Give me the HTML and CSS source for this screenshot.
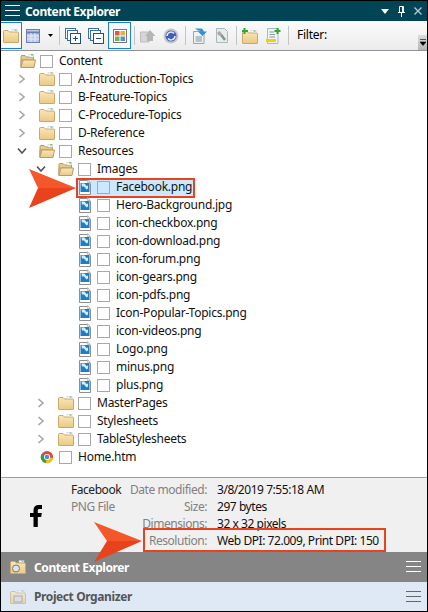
FILE: index.html
```html
<!DOCTYPE html>
<html lang="en">
<head>
    <meta charset="UTF-8">
    <meta name="viewport" content="width=device-width, initial-scale=1.0">
    <title>Content Explorer</title>
    <link rel="stylesheet" href="styles.css">
</head>
<body>

<!-- shared icons -->
<svg class="defs" width="0" height="0">
    <defs>
        <linearGradient id="folderFill" x1="0" y1="0" x2="0" y2="1">
            <stop offset="0" stop-color="#fbe7b4"/>
            <stop offset="1" stop-color="#e9c987"/>
        </linearGradient>
        <symbol id="folder" viewBox="0 0 16 14">
            <path d="M0.5 13V2.5Q0.5 1.5 1.5 1.5H5L6.5 3H14.500Q15.500 3 15.500 4V13Q15.500 13.500 15 13.500H1Q0.500 13.500 0.500 13Z" fill="url(#folderFill)" stroke="#c9a86a"/>
            <rect x="9" y="0.5" width="5" height="2" fill="#fff" stroke="#c9c9b0" stroke-width="0.5"/>
            <rect x="11.5" y="0.5" width="2" height="1.2" fill="#5bb8d8"/>
        </symbol>
        <symbol id="folderOpen" viewBox="0 0 16 14">
            <path d="M1 13V2.5Q1 1.5 2 1.5H5L6.5 3H13.500V6H1Z" fill="#e7cb8e" stroke="#b79a66"/>
            <rect x="9" y="0.5" width="4.5" height="2.5" fill="#fff" stroke="#c9c9b0" stroke-width="0.5"/>
            <rect x="11" y="0.3" width="2.4" height="1.2" fill="#4fc06f"/>
            <path d="M3 6H15.500L14 13.500H0.800Z" fill="url(#folderFill)" stroke="#b79a66"/>
        </symbol>
        <symbol id="image" viewBox="0 0 12 16">
            <path d="M0.5 1.500H8.500L11.500 4.500V15.500H0.500Z" fill="#fff" stroke="#8f8f8f"/>
            <path d="M8.500 0.500L11.500 3.500H8.500Z" fill="#e4e4e4" stroke="#a8a8a8" stroke-width="0.600"/>
            <rect x="1.500" y="4" width="9" height="9" fill="#1a7ec8"/>
            <path d="M2.500 4.500H5.500L7.500 7L9 6.500V9.500L7.500 10.500L5 7.500H3Z" fill="#d4ebf9"/>
        </symbol>
        <symbol id="chevRight" viewBox="0 0 8 10">
            <path d="M1.5 1L6 5L1.5 9" fill="none" stroke="#a6a6a6" stroke-width="1.6"/>
        </symbol>
        <symbol id="chevDown" viewBox="0 0 10 8">
            <path d="M1 1.5L5 6L9 1.5" fill="none" stroke="#555" stroke-width="1.6"/>
        </symbol>
        <symbol id="menu" viewBox="0 0 15 12">
            <path d="M0 0.5H15M0 5.5H15M0 10.5H15" fill="none" stroke="currentColor"/>
        </symbol>
        <symbol id="stack" viewBox="0 0 16 16">
            <rect x="0.5" y="0.5" width="10" height="10" fill="#fff" stroke="#3a6ea5"/>
            <rect x="2.5" y="2.5" width="10" height="10" fill="#fff" stroke="#3a6ea5"/>
            <rect x="5.5" y="5.5" width="10" height="10" fill="#fff" stroke="#1f4f8a"/>
        </symbol>
    </defs>
</svg>

<div class="panel">
    <header class="title-bar">
        <svg class="title-menu"><use href="#menu"/></svg>
        <span class="title-text">Content Explorer</span>
        <svg class="title-icon" width="8" height="5" viewBox="0 0 8 5"><path d="M0 0H8L4 5Z" fill="#fff"/></svg>
        <svg class="title-icon pin" width="7" height="11" viewBox="0 0 7 11"><path d="M1.5 0.5H5.5V6.5H1.5ZM0 6.5H7M3.5 7V11" fill="none" stroke="#fff"/><path d="M4 1H5.5V6H4Z" fill="#fff"/></svg>
        <svg class="title-icon close" width="8" height="8" viewBox="0 0 8 8"><path d="M0.5 0.5L7.5 7.5M7.5 0.5L0.5 7.5" stroke="#b5c9cf" stroke-width="1.4"/></svg>
    </header>

    <div class="toolbar">
        <span class="tool active first"><svg class="ico" width="16" height="14"><use href="#folder"/></svg></span>
        <svg class="ico tool-table" width="14" height="14" viewBox="0 0 14 14"><rect x="0.5" y="0.5" width="13" height="13" fill="#bcc9ea" stroke="#6d7fae"/><path d="M0.5 3.5H13.5" stroke="#6d7fae" stroke-width="2"/><path d="M1 7H13M1 10H13M5 4V13M9 4V13" stroke="#e4eaf8"/></svg>
        <svg class="caret" width="5" height="3" viewBox="0 0 5 3"><path d="M0 0H5L2.500 3Z" fill="#000"/></svg>
        <span class="sep sep-a"></span>
        <svg class="ico tool-plus" width="16" height="16"><use href="#stack"/><path d="M8 10.500H13M10.500 8V13" stroke="#1f4f8a"/></svg>
        <svg class="ico tool-minus" width="16" height="16"><use href="#stack"/><path d="M8 10.500H13" stroke="#1f4f8a"/></svg>
        <span class="tool active tool-color">
            <svg width="14" height="14" viewBox="0 0 14 14"><rect x="0.500" y="0.500" width="13" height="13" fill="#fff" stroke="#777"/><rect x="2" y="2" width="4.500" height="4.500" fill="#e2574c"/><rect x="7.500" y="2" width="4.500" height="4.500" fill="#efb02f"/><rect x="2" y="7.500" width="4.500" height="4.500" fill="#6fb65a"/><rect x="7.500" y="7.500" width="4.500" height="4.500" fill="#5b8fd6"/></svg>
        </span>
        <span class="sep sep-b"></span>
        <svg class="ico tool-grey" width="16" height="14" viewBox="0 0 16 14"><path d="M0.500 3H9V13H0.500Z" fill="#d6d6d6" stroke="#bdbdbd"/><path d="M5 7L10 1L15.500 7H13V12H7V7Z" fill="#b5b5b5"/></svg>
        <svg class="ico tool-refresh" width="16" height="16" viewBox="0 0 16 16"><circle cx="8" cy="8" r="7.500" fill="#c8c8c8"/><circle cx="8" cy="8" r="5.500" fill="#3f5fc0"/><path d="M4 8A4 4 0 0 1 11 5.500M12 8A4 4 0 0 1 5 10.500" fill="none" stroke="#e8eefc" stroke-width="1.500"/></svg>
        <span class="sep sep-c"></span>
        <svg class="ico tool-doc" width="15" height="16" viewBox="0 0 15 16"><path d="M0.500 3.500H11V15.500H0.500Z" fill="#eef3f3" stroke="#8fa8a8"/><path d="M2.500 9H9M2.500 11H9M2.500 13H9" stroke="#7f9696"/><path d="M2 0.500H8Q10 0.500 10.500 3.500H14L9.500 8L5 3.500H8Q7 2.500 5 2.500Z" fill="#2f93d8"/></svg>
        <svg class="ico tool-wrench" width="12" height="15" viewBox="0 0 12 15"><path d="M0.500 0.500H8.500L11.500 3.500V14.500H0.500Z" fill="#e6eded" stroke="#a9b8b8"/><path d="M4.500 6L9 12" stroke="#8e8e8e" stroke-width="2.500"/><path d="M2 3.500A2.500 2.500 0 0 0 6.500 6.500L5 5.500L4.500 3.500Z" fill="#a8a8a8"/></svg>
        <span class="sep sep-d"></span>
        <svg class="ico tool-newfolder" width="16" height="16" viewBox="0 0 16 16"><svg x="0" y="2" width="16" height="14"><use href="#folder"/></svg><path d="M2.500 0V6M0 3H6" stroke="#2ea836" stroke-width="2"/></svg>
        <svg class="ico tool-newdoc" width="15" height="16" viewBox="0 0 15 16"><path d="M1.500 0.500H12V15.500H1.500Z" fill="#eef3f3" stroke="#a9b8b8"/><path d="M3.500 4H8M3.500 6.500H9M3.500 9H9" stroke="#8a9a9a"/><rect x="0" y="11" width="10" height="3" fill="#f4d000"/><path d="M11.500 0V6M8.500 3H14.500" stroke="#2ea836" stroke-width="2"/></svg>
        <span class="sep sep-e"></span>
        <span class="filter-label">Filter:</span>
        <span class="overflow"><svg width="6" height="7" viewBox="0 0 6 7"><path d="M0 0.500H6M0 3H6L3 6.500Z" fill="#000" stroke="#000" stroke-width="0.600"/></svg></span>
    </div>

    <ul class="tree">
        <li class="row d0"><span class="twist"></span><svg class="node-icon"><use href="#folderOpen"/></svg><span class="check"></span><span class="name">Content</span></li>
        <li class="row d1"><span class="twist"><svg class="chev"><use href="#chevRight"/></svg></span><svg class="node-icon"><use href="#folder"/></svg><span class="check"></span><span class="name">A-Introduction-Topics</span></li>
        <li class="row d1"><span class="twist"><svg class="chev"><use href="#chevRight"/></svg></span><svg class="node-icon"><use href="#folder"/></svg><span class="check"></span><span class="name">B-Feature-Topics</span></li>
        <li class="row d1"><span class="twist"><svg class="chev"><use href="#chevRight"/></svg></span><svg class="node-icon"><use href="#folder"/></svg><span class="check"></span><span class="name">C-Procedure-Topics</span></li>
        <li class="row d1"><span class="twist"><svg class="chev"><use href="#chevRight"/></svg></span><svg class="node-icon"><use href="#folder"/></svg><span class="check"></span><span class="name">D-Reference</span></li>
        <li class="row d1"><span class="twist"><svg class="chev-open"><use href="#chevDown"/></svg></span><svg class="node-icon"><use href="#folderOpen"/></svg><span class="check"></span><span class="name">Resources</span></li>
        <li class="row d2"><span class="twist"><svg class="chev-open"><use href="#chevDown"/></svg></span><svg class="node-icon"><use href="#folderOpen"/></svg><span class="check"></span><span class="name">Images</span></li>
        <li class="row d3"><span class="twist"></span><span class="selected"><svg class="file-icon"><use href="#image"/></svg><span class="check"></span><span class="name">Facebook.png</span></span></li>
        <li class="row d3"><span class="twist"></span><svg class="file-icon"><use href="#image"/></svg><span class="check"></span><span class="name">Hero-Background.jpg</span></li>
        <li class="row d3"><span class="twist"></span><svg class="file-icon"><use href="#image"/></svg><span class="check"></span><span class="name">icon-checkbox.png</span></li>
        <li class="row d3"><span class="twist"></span><svg class="file-icon"><use href="#image"/></svg><span class="check"></span><span class="name">icon-download.png</span></li>
        <li class="row d3"><span class="twist"></span><svg class="file-icon"><use href="#image"/></svg><span class="check"></span><span class="name">icon-forum.png</span></li>
        <li class="row d3"><span class="twist"></span><svg class="file-icon"><use href="#image"/></svg><span class="check"></span><span class="name">icon-gears.png</span></li>
        <li class="row d3"><span class="twist"></span><svg class="file-icon"><use href="#image"/></svg><span class="check"></span><span class="name">icon-pdfs.png</span></li>
        <li class="row d3"><span class="twist"></span><svg class="file-icon"><use href="#image"/></svg><span class="check"></span><span class="name">Icon-Popular-Topics.png</span></li>
        <li class="row d3"><span class="twist"></span><svg class="file-icon"><use href="#image"/></svg><span class="check"></span><span class="name">icon-videos.png</span></li>
        <li class="row d3"><span class="twist"></span><svg class="file-icon"><use href="#image"/></svg><span class="check"></span><span class="name">Logo.png</span></li>
        <li class="row d3"><span class="twist"></span><svg class="file-icon"><use href="#image"/></svg><span class="check"></span><span class="name">minus.png</span></li>
        <li class="row d3"><span class="twist"></span><svg class="file-icon"><use href="#image"/></svg><span class="check"></span><span class="name">plus.png</span></li>
        <li class="row d2"><span class="twist"><svg class="chev"><use href="#chevRight"/></svg></span><svg class="node-icon"><use href="#folder"/></svg><span class="check"></span><span class="name">MasterPages</span></li>
        <li class="row d2"><span class="twist"><svg class="chev"><use href="#chevRight"/></svg></span><svg class="node-icon"><use href="#folder"/></svg><span class="check"></span><span class="name">Stylesheets</span></li>
        <li class="row d2"><span class="twist"><svg class="chev"><use href="#chevRight"/></svg></span><svg class="node-icon"><use href="#folder"/></svg><span class="check"></span><span class="name">TableStylesheets</span></li>
        <li class="row d1"><span class="twist"></span>
            <svg class="node-icon" viewBox="0 0 16 16"><circle cx="8" cy="8" r="7" fill="#dd4b3e"/><path d="M8 8L14.900 9A7 7 0 0 1 6 14.700Z" fill="#f4c20d"/><path d="M8 8L6.500 15A7 7 0 0 1 1.800 4.500Z" fill="#2f9e4f"/><circle cx="8" cy="8" r="3.500" fill="#fff"/><circle cx="8" cy="8" r="2.600" fill="#4a8af4"/></svg>
            <span class="check"></span><span class="name">Home.htm</span></li>
    </ul>

    <section class="details">
        <div class="preview">
            <svg width="12" height="22" viewBox="0 0 12 22"><path d="M3.500 22V12H0V8H3.500V5.500C3.500 1.800 5.500 0 8.500 0H12V4H9.500C8.300 4 7.800 4.600 7.800 5.800V8H11.800L11.200 12H7.800V22Z" fill="#000"/></svg>
        </div>
        <div class="file-summary">
            <span class="file-name">Facebook</span>
            <span>PNG File</span>
        </div>
        <dl class="props">
            <dt>Date modified:</dt><dd>3/8/2019 7:55:18 AM</dd>
            <dt>Size:</dt><dd>297 bytes</dd>
            <dt>Dimensions:</dt><dd>32 x 32 pixels</dd>
            <dt>Resolution:</dt><dd>Web DPI: 72.009, Print DPI: 150</dd>
        </dl>
    </section>

    <div class="acc acc-on">
        <svg class="acc-icon" width="16" height="14"><use href="#folder"/><circle cx="6" cy="8.500" r="3.500" fill="#dfe3ea" stroke="#777"/></svg>
        <span class="acc-label">Content Explorer</span>
        <svg class="acc-menu"><use href="#menu"/></svg>
    </div>
    <div class="acc acc-off">
        <svg class="acc-icon faded" width="16" height="14"><use href="#folder"/><rect x="4" y="6" width="8" height="6" fill="#d4d8dc" stroke="#888"/></svg>
        <span class="acc-label">Project Organizer</span>
        <svg class="acc-menu"><use href="#menu"/></svg>
    </div>

    <!-- callouts laid over the screenshot -->
    <div class="callout-box"></div>
    <svg class="arrow arrow-tree" width="48" height="40" viewBox="0 0 48 40"><path d="M0 0L47 19H9Z" fill="#f4582a"/><path d="M47 19L0 39L9 19Z" fill="#e8431c"/></svg>
    <svg class="arrow arrow-details" width="48" height="40" viewBox="0 0 48 40"><path d="M0 0L48 19H13Z" fill="#f4582a"/><path d="M48 19L0 40L13 19Z" fill="#e8431c"/></svg>
</div>

</body>
</html>
```

FILE: styles.css
```css
* {
    box-sizing: border-box;
}
body {
    margin: 0;
    font-family: "Noto Sans", Arial, sans-serif;
    font-size: 12px;
    letter-spacing: -0.25px;
    background-color: #fff;
}
ul, dl, dd {
    margin: 0;
    padding: 0;
}
svg {
    display: block;
    flex-shrink: 0;
}
.defs {
    position: absolute;
}
.panel {
    position: relative;
    width: 428px;
    height: 612px;
    border: 1px solid #000;
    display: flex;
    flex-direction: column;
    overflow: hidden;
}

/* title bar */
.title-bar {
    height: 20px;
    flex-shrink: 0;
    display: flex;
    align-items: center;
    background-color: #004455;
    color: #fff;
    padding-left: 4px;
}
.title-menu {
    width: 15px;
    height: 12px;
    color: #fff;
}
.title-text {
    margin-left: 5px;
    font-weight: 700;
    flex: 1;
    letter-spacing: -0.4px;
}
.title-icon {
    margin-right: 9px;
}
.title-icon.close {
    margin-right: 5px;
}

/* toolbar */
.toolbar {
    position: relative;
    height: 30px;
    flex-shrink: 0;
    display: flex;
    align-items: center;
    background: linear-gradient(#fbfbfb, #ececec);
    border-bottom: 1px solid #8e9498;
}
.tool {
    display: flex;
    align-items: center;
    justify-content: center;
    height: 27px;
    flex-shrink: 0;
}
.tool.active {
    border: 1px solid #1a7fd0;
    background-color: #f6f9fc;
}
.tool.first {
    width: 22px;
    margin-left: -1px;
}
.tool-table { margin-left: 4px; }
.caret { margin-left: 8px; }
.sep {
    width: 1px;
    height: 19px;
    background-color: #c4c4c4;
    flex-shrink: 0;
}
.sep-a { margin-left: 6px; }
.tool-plus { margin-left: 5px; }
.tool-minus { margin-left: 7px; }
.tool-color { width: 23px; margin-left: 4px; }
.sep-b { margin-left: 3px; }
.tool-grey { margin-left: 5px; }
.tool-refresh { margin-left: 7px; }
.sep-c { margin-left: 6px; }
.tool-doc { margin-left: 7px; }
.tool-wrench { margin-left: 8px; }
.sep-d { margin-left: 8px; }
.tool-newfolder { margin-left: 5px; }
.tool-newdoc { margin-left: 8px; }
.sep-e { margin-left: 7px; }
.filter-label {
    margin-left: 8px;
    color: #000;
    margin-top: -2px;
}
.overflow {
    margin-left: auto;
    align-self: flex-end;
    width: 9px;
    height: 15px;
    background: linear-gradient(#dcdcdc, #b4b4b4);
    display: flex;
    align-items: center;
    justify-content: center;
}

/* tree */
.tree {
    list-style: none;
    height: 426px;
    flex-shrink: 0;
    padding-top: 1px;
    color: #111;
    background-color: #fff;
}
.row {
    display: flex;
    align-items: center;
    height: 18px;
    white-space: nowrap;
}
.d0 { padding-left: 0; }
.d1 { padding-left: 19px; }
.d2 { padding-left: 38px; }
.d3 { padding-left: 57px; }
.twist {
    width: 19px;
    flex-shrink: 0;
    display: flex;
    align-items: center;
}
.chev {
    width: 8px;
    height: 10px;
    margin-left: -2px;
}
.chev-open {
    width: 10px;
    height: 8px;
    margin-left: -3px;
}
.node-icon {
    width: 16px;
    height: 14px;
    margin-right: 4px;
}
.file-icon {
    width: 12px;
    height: 16px;
    margin: 0 6px 0 2px;
}
.check {
    width: 13px;
    height: 13px;
    border: 1px solid #a8a8a8;
    background-color: #fff;
    margin-right: 6px;
    flex-shrink: 0;
}
.name {
    margin-top: -2px;
}
.selected {
    display: flex;
    align-items: center;
    align-self: flex-end;
    height: 16px;
    width: 115px;
    margin-left: 1px;
    padding-bottom: 2px;
    background-color: #cce8ff;
    outline: 2px solid #e8431c;
}
.selected .file-icon {
    margin-left: 1px;
}
.selected .check {
    background-color: #cce8ff;
}

/* details */
.details {
    height: 75px;
    flex-shrink: 0;
    display: flex;
    background-color: #f0f0f0;
    border-top: 1px solid #a0a0a0;
    color: #808080;
    line-height: 17px;
    letter-spacing: -0.45px;
    padding-top: 3px;
}
.preview {
    width: 70px;
    flex-shrink: 0;
    display: flex;
    justify-content: center;
    padding-top: 24px;
}
.file-summary {
    width: 72px;
    flex-shrink: 0;
    display: flex;
    flex-direction: column;
}
.file-name {
    color: #222;
}
.props {
    display: grid;
    grid-template-columns: 64px auto;
    column-gap: 10px;
    grid-auto-rows: 17px;
}
.props dt {
    justify-self: end;
    white-space: nowrap;
}
.props dd {
    color: #111;
    white-space: nowrap;
}

/* accordion bars */
.acc {
    height: 30px;
    flex-shrink: 0;
    display: flex;
    align-items: center;
    padding-left: 9px;
    font-weight: 700;
    letter-spacing: -0.4px;
}
.acc-on {
    background-color: #858585;
    color: #fff;
}
.acc-off {
    background-color: #dfe8f5;
    color: #555;
    height: 29px;
}
.acc-icon {
    margin-right: 8px;
}
.acc-icon.faded {
    opacity: 0.6;
}
.acc-label {
    flex: 1;
}
.acc-menu {
    width: 15px;
    height: 12px;
    margin-right: 6px;
}
.acc-on .acc-menu { color: #fff; }
.acc-off .acc-menu { color: #666; }

/* red callouts */
.callout-box {
    position: absolute;
    left: 142px;
    top: 527px;
    width: 243px;
    height: 24px;
    border: 2px solid #e8431c;
}
.arrow {
    position: absolute;
}
.arrow-tree {
    left: 28px;
    top: 168px;
}
.arrow-details {
    left: 93px;
    top: 521px;
}
```
